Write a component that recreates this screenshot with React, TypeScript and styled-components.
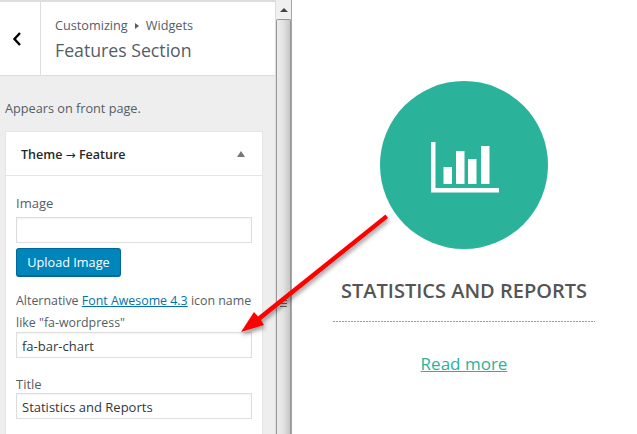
import React from "react"
import styled, { createGlobalStyle } from "styled-components"

const GlobalStyle = createGlobalStyle`
  html, body {
    margin: 0;
    padding: 0;
    background: #fff;
  }
  * {
    box-sizing: border-box;
  }
`

const Page = styled.div`
  position: relative;
  width: 637px;
  height: 434px;
  display: flex;
  overflow: hidden;
  font-family: "Open Sans", "Noto Sans", sans-serif;
`

const Sidebar = styled.div`
  width: 276px;
  height: 434px;
  flex-shrink: 0;
  background: #eeeeee;
  border-top: 2px solid #dddddd;
  border-right: 1px solid #dddddd;
  overflow: hidden;
`

const Header = styled.div`
  display: flex;
  height: 74px;
  background: #fff;
  border-bottom: 1px solid #dddddd;
`

const BackButton = styled.div`
  width: 41px;
  display: flex;
  align-items: center;
  justify-content: center;
  border-right: 1px solid #dddddd;
  padding-right: 6px;
`

const Titles = styled.div`
  padding: 14px 0 0 14px;
`

const Crumb = styled.div`
  display: flex;
  align-items: center;
  gap: 6px;
  font-size: 12.7px;
  line-height: 19px;
  color: #555d66;
`

const CrumbArrow = styled.span`
  width: 0;
  height: 0;
  border-left: 4px solid #555d66;
  border-top: 3px solid transparent;
  border-bottom: 3px solid transparent;
  margin: 0 1px;
`

const PanelTitle = styled.div`
  font-size: 17.7px;
  line-height: 24px;
  margin-top: 3px;
  color: #555d66;
`

const Note = styled.div`
  padding: 23px 0 0 5px;
  font-size: 12.7px;
  line-height: 18px;
  color: #555d66;
`

const Widget = styled.div`
  margin: 14px 0 0 5px;
  width: 258px;
  background: #fff;
  border: 1px solid #e5e5e5;
  border-bottom: none;
`

const WidgetTop = styled.div`
  height: 44px;
  display: flex;
  align-items: center;
  justify-content: space-between;
  padding: 1px 17px 0 15px;
  border-bottom: 1px solid #e5e5e5;
  font-size: 12.5px;
  font-weight: 600;
  color: #23282d;
`

const TitleArrow = styled.span`
  font-family: "DejaVu Sans", sans-serif;
  font-size: 12px;
  font-weight: 400;
`

const Caret = styled.span`
  width: 0;
  height: 0;
  border-bottom: 6px solid #72777c;
  border-left: 4.5px solid transparent;
  border-right: 4.5px solid transparent;
`

const WidgetBody = styled.div`
  padding: 18px 10px 40px;
  display: flex;
  flex-direction: column;
`

const Label = styled.div<{ $mt?: number }>`
  font-size: 13px;
  line-height: 18px;
  color: #555d66;
  margin-top: ${(p) => p.$mt ?? 0}px;
`

const TextInput = styled.div<{ $mt?: number }>`
  width: 236px;
  height: 26px;
  border: 1px solid #dddddd;
  box-shadow: inset 0 1px 2px rgba(0, 0, 0, 0.05);
  background: #fff;
  padding-left: 5px;
  font-size: 13px;
  line-height: 26px;
  color: #32373c;
  margin-top: ${(p) => p.$mt ?? 0}px;
`

const UploadButton = styled.div`
  width: 105px;
  height: 29px;
  margin-top: 5px;
  background: #0085ba;
  border: 1px solid #006799;
  border-bottom-width: 2px;
  border-radius: 3px;
  color: #fff;
  font-size: 12.7px;
  line-height: 26px;
  text-align: center;
`

const Help = styled.div`
  margin-top: 15px;
  display: flex;
  flex-direction: column;
  gap: 4px;
  font-size: 12.4px;
  line-height: 18px;
  color: #555d66;
  white-space: nowrap;
`

const HelpLink = styled.span`
  color: #0073aa;
  text-decoration: underline;
`

const Scrollbar = styled.div`
  position: relative;
  width: 16px;
  height: 434px;
  flex-shrink: 0;
  background: #f0f0f0;
  border-right: 1px solid #a8a8a8;
  display: flex;
  flex-direction: column;
`

const ScrollUp = styled.div`
  height: 19px;
  display: flex;
  align-items: center;
  justify-content: center;
`

const ScrollCaret = styled.span`
  width: 0;
  height: 0;
  border-bottom: 4px solid #444;
  border-left: 4px solid transparent;
  border-right: 4px solid transparent;
`

const ScrollThumb = styled.div`
  flex: 1;
  width: 15px;
  border: 1px solid #979797;
  border-bottom: none;
  border-radius: 2px 2px 0 0;
  background: linear-gradient(to right, #ececec 0%, #e2e2e2 50%, #c6c6c6 100%);
  display: flex;
  justify-content: center;
  padding-top: 280px;
`

const ThumbGrip = styled.div`
  width: 7px;
  height: 7px;
  background: repeating-linear-gradient(to bottom, #666 0 1px, transparent 1px 3px);
`

const Preview = styled.div`
  flex: 1;
  display: flex;
  flex-direction: column;
  align-items: center;
  padding: 81px 1px 0 0;
`

const Circle = styled.div`
  width: 168px;
  height: 168px;
  border-radius: 50%;
  background: #2ab29a;
  display: flex;
  align-items: center;
  justify-content: center;
`

const ChartIcon = styled.svg`
  margin: 4px 0 0 1px;
`

const FeatureTitle = styled.div`
  margin-top: 28px;
  font-size: 20px;
  line-height: 28px;
  font-weight: 600;
  color: #555;
  white-space: nowrap;
`

const Divider = styled.div`
  width: 262px;
  height: 1px;
  margin-top: 16px;
  background: repeating-linear-gradient(to right, #999 0 2px, transparent 2px 3px);
`

const ReadMore = styled.div`
  margin-top: 29px;
  font-size: 17px;
  line-height: 26px;
  color: #2ab29a;
  text-decoration: underline;
`

const ArrowOverlay = styled.svg`
  position: absolute;
  left: 0;
  top: 0;
  pointer-events: none;
`

const App: React.FC = () => {
  return (
    <Page>
      <GlobalStyle />
      <Sidebar>
        <Header>
          <BackButton>
            <svg width="10" height="16" viewBox="0 0 10 16">
              <path d="M8 2 L2.5 8 L8 14" fill="none" stroke="#000" strokeWidth="2.4" />
            </svg>
          </BackButton>
          <Titles>
            <Crumb>
              Customizing <CrumbArrow /> Widgets
            </Crumb>
            <PanelTitle>Features Section</PanelTitle>
          </Titles>
        </Header>
        <Note>Appears on front page.</Note>
        <Widget>
          <WidgetTop>
            <span>
              Theme <TitleArrow>→</TitleArrow> Feature
            </span>
            <Caret />
          </WidgetTop>
          <WidgetBody>
            <Label>Image</Label>
            <TextInput $mt={5} />
            <UploadButton>Upload Image</UploadButton>
            <Help>
              <div>
                Alternative <HelpLink>Font Awesome 4.3</HelpLink> icon name
              </div>
              <div>like "fa-wordpress"</div>
            </Help>
            <TextInput>fa-bar-chart</TextInput>
            <Label $mt={17}>Title</Label>
            <TextInput>Statistics and Reports</TextInput>
          </WidgetBody>
        </Widget>
      </Sidebar>
      <Scrollbar>
        <ScrollUp>
          <ScrollCaret />
        </ScrollUp>
        <ScrollThumb>
          <ThumbGrip />
        </ScrollThumb>
      </Scrollbar>
      <Preview>
        <Circle>
          <ChartIcon width="68" height="51" viewBox="0 0 68 51" fill="#fff">
            <path d="M0 0 H4.5 V46 H68 V50.5 H0 Z" />
            <rect x="12.5" y="25" width="8.5" height="17" />
            <rect x="25" y="9" width="8.5" height="33" />
            <rect x="37" y="17" width="8.5" height="25" />
            <rect x="50" y="4" width="8.5" height="38" />
          </ChartIcon>
        </Circle>
        <FeatureTitle>STATISTICS AND REPORTS</FeatureTitle>
        <Divider />
        <ReadMore>Read more</ReadMore>
      </Preview>
      <ArrowOverlay width="637" height="434" viewBox="0 0 637 434">
        <defs>
          <filter id="arrowShadow" x="-20%" y="-20%" width="140%" height="140%">
            <feDropShadow dx="1" dy="3" stdDeviation="2" floodColor="#000" floodOpacity="0.4" />
          </filter>
        </defs>
        <path
          d="M241 332 L254 312 L258 316.5 L385.5 214.5 L388 218 L261 320 L264 325 Z"
          fill="#ff0000"
          filter="url(#arrowShadow)"
        />
      </ArrowOverlay>
    </Page>
  )
}

export default App
